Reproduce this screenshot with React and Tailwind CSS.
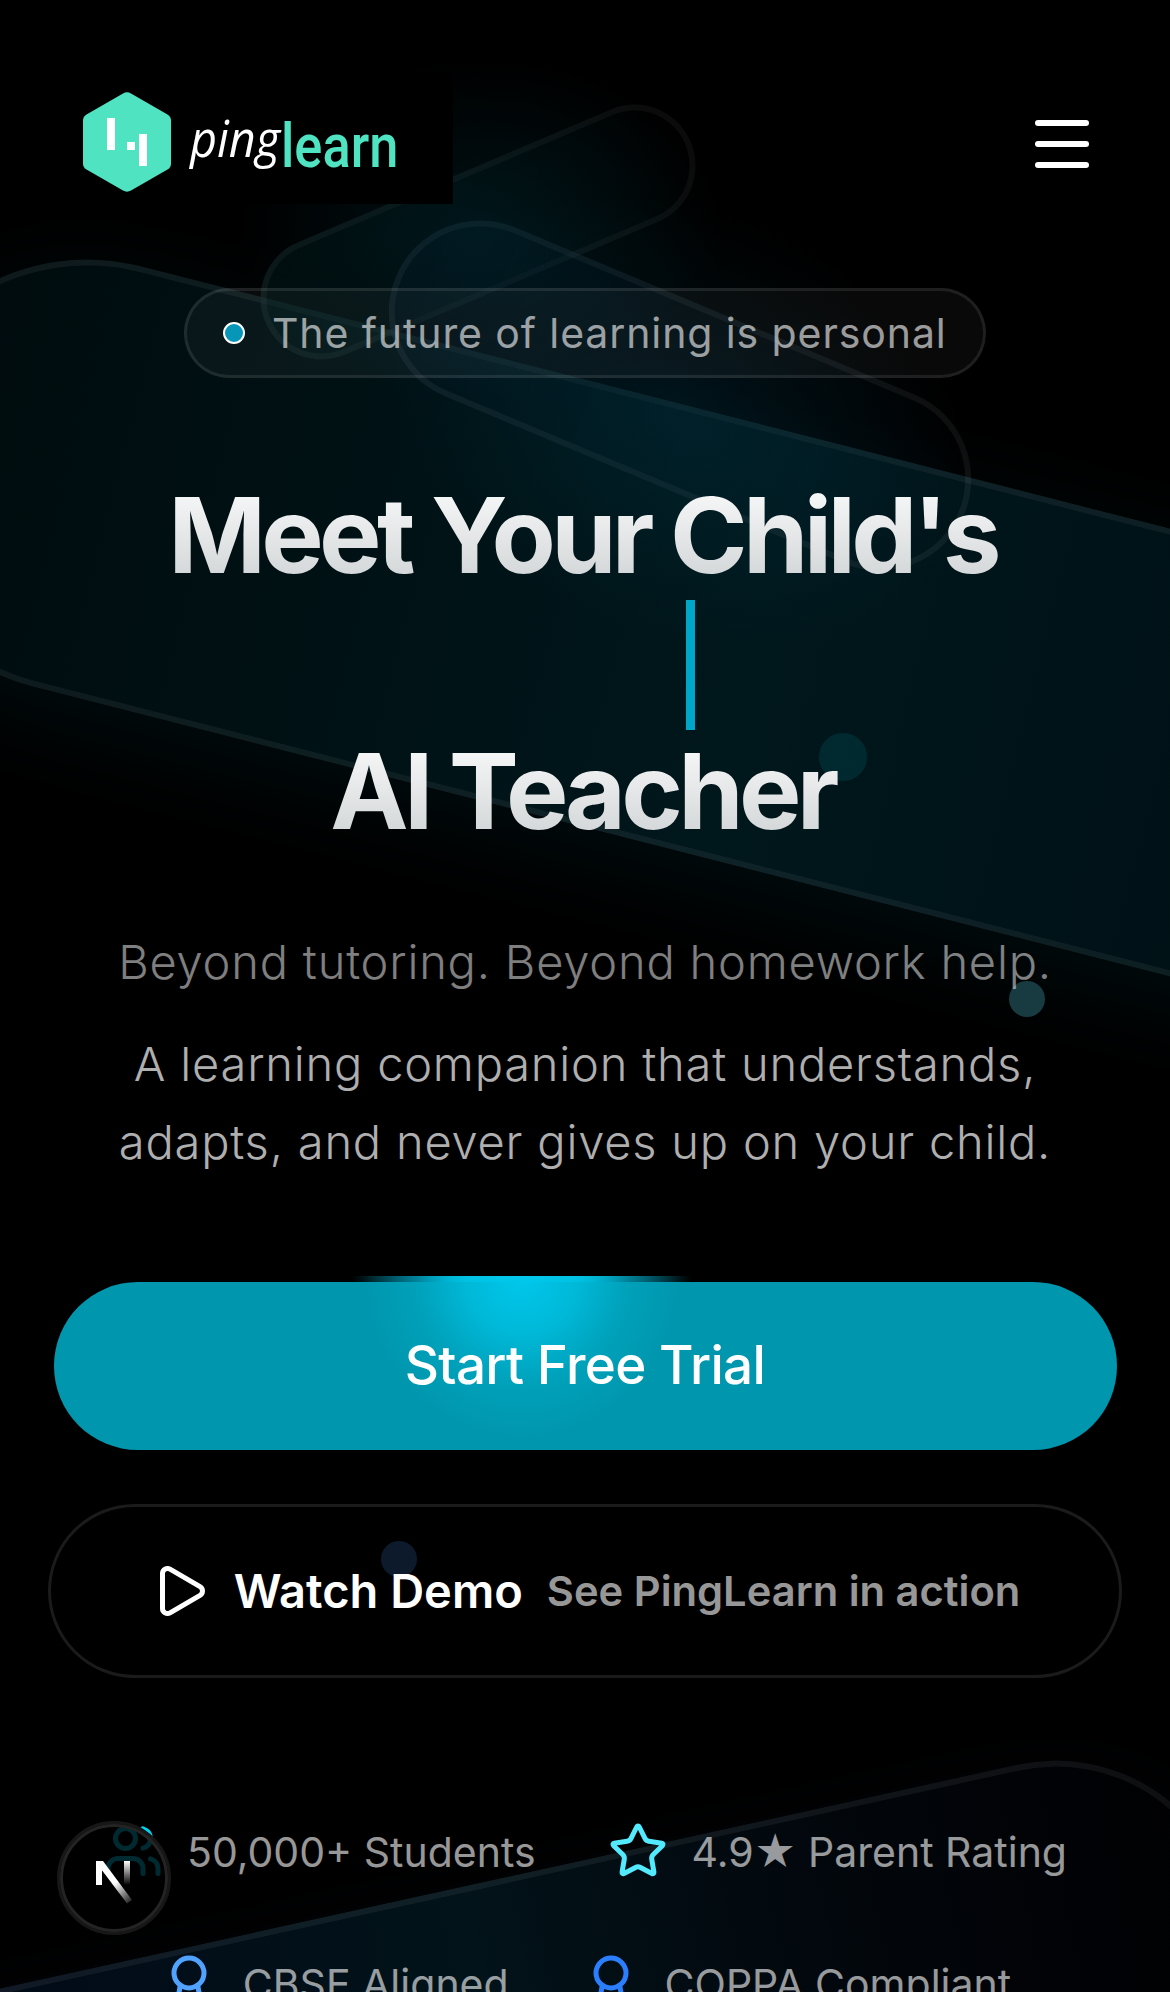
import { Play, Star, Users, Award } from "lucide-react";

const shapes = [
  // large upper band
  "left-[-151px] top-[430px] w-[1814px] h-[434px] rotate-[14.3deg] border-white/[0.055] from-[#000b0d] via-[#00171c] to-[#000d11] shadow-[0_24px_96px_rgba(0,60,75,0.22)]",
  // large lower band
  "left-[-251px] top-[1883px] w-[1500px] h-[360px] rotate-[-12.4deg] border-white/[0.06] from-[#020617] via-[#021319] to-[#010103] shadow-[0_24px_96px_rgba(30,40,60,0.18)]",
];

function Backdrop() {
  return (
    <div className="absolute inset-0 overflow-hidden pointer-events-none">
      {shapes.map((s) => (
        <div key={s} className={"absolute rounded-full border-[6px] bg-linear-to-r bg-origin-border " + s} />
      ))}
      <div className="absolute left-[247px] top-[171px] w-[462px] h-[122px] rotate-[-23deg] rounded-full border-[6px] border-white/[0.045] bg-linear-to-r from-[#001a1a]/50 to-transparent bg-origin-border" />
      <div className="absolute left-[372px] top-[304px] w-[616px] h-[183px] rotate-[22.7deg] rounded-full border-[6px] border-white/[0.055] bg-linear-to-r from-[#021420]/40 to-transparent bg-origin-border" />
      <div className="absolute left-[240px] top-[60px] w-[480px] h-[340px] bg-[radial-gradient(closest-side,rgba(0,60,75,0.3),transparent)]" />
      <div className="absolute left-[380px] top-[210px] w-[600px] h-[420px] rotate-[22deg] bg-[radial-gradient(closest-side,rgba(0,70,90,0.24),transparent)]" />
      <span className="absolute left-[819px] top-[733px] size-[48px] rounded-full bg-[#00d3f2]/10" />
      <span className="absolute left-[1009px] top-[981px] size-[36px] rounded-full bg-[#173b41]" />
      <span className="absolute left-[381px] top-[1541px] size-[36px] rounded-full bg-[#0c1a2c]" />
    </div>
  );
}

function Logo() {
  return (
    <div className="relative flex h-[132px] w-[381px] bg-black">
      <svg className="absolute left-[11px] top-[20px]" width="88" height="100" viewBox="0 0 88 100">
        <path d="M40 1.5Q44-.8 48 1.5L84.500 22.500Q88 24.500 88 28.500V71.500Q88 75.500 84.500 77.500L48 98.500Q44 100.800 40 98.500L3.500 77.500Q0 75.500 0 71.500V28.500Q0 24.500 3.500 22.500Z" fill="#50e3c2" />
        <path d="M24 26h8v32h-8zM44 50h8v8h-8zM56 42h8v32h-8z" fill="#fff" />
      </svg>
      <span className="absolute left-[118px] top-[35px] origin-left scale-x-[0.9] font-['Open_Sans',sans-serif] text-[52px]/[60px] font-medium italic text-white">ping</span>
      <span className="absolute left-[209px] top-[38px] origin-left scale-x-[0.845] font-['Roboto',sans-serif] text-[62px]/[72px] font-medium text-[#50e3c2]">learn</span>
    </div>
  );
}

function NextBadge() {
  return (
    <div className="absolute left-[57px] top-[1821px] flex size-[114px] items-center justify-center rounded-full border-[3px] border-[#171717] bg-black/80">
      <div className="absolute inset-0 rounded-full border-[3px] border-[#242424]" />
      <svg className="relative" width="108" height="108" viewBox="0 0 108 108">
        <defs>
          <linearGradient id="stem" x1="0" y1="0" x2="0" y2="1">
            <stop stopColor="#fff" />
            <stop offset="1" stopColor="#fff" stopOpacity="0" />
          </linearGradient>
          <linearGradient id="diag" gradientUnits="userSpaceOnUse" x1="52" y1="62" x2="71" y2="83">
            <stop stopColor="#fff" />
            <stop offset="1" stopColor="#fff" stopOpacity="0" />
          </linearGradient>
        </defs>
        <path d="M36 37h6v24h-6z" fill="#fff" />
        <path d="M36 37h7L72 76L67 79.500L38 41Z" fill="url(#diag)" />
        <path d="M64 37h6v24h-6z" fill="url(#stem)" />
      </svg>
    </div>
  );
}

function Stat({ icon: Icon, color, children }) {
  return (
    <div className="flex items-center gap-[24px]">
      <Icon size={60} strokeWidth={2} className={color} />
      <span className="pt-[3px] text-[41px]/[57px] text-white/60">{children}</span>
    </div>
  );
}

export default function App() {
  return (
    <div className="relative h-[1992px] w-[1170px] overflow-hidden bg-black font-['Inter',sans-serif] text-white antialiased">
      <Backdrop />
      <div className="relative flex flex-col items-center">
        <header className="flex h-[288px] w-full items-start justify-between pl-[72px] pr-[81px] pt-[72px]">
          <Logo />
          <button className="mt-[48px] flex w-[54px] flex-col gap-[15px]">
            <span className="h-[6px] rounded-full bg-white" />
            <span className="h-[6px] rounded-full bg-white" />
            <span className="h-[6px] rounded-full bg-white" />
          </button>
        </header>

        <div className="flex h-[90px] w-[802px] items-center gap-[27px] rounded-full border-[3px] border-white/[0.09] bg-white/[0.035] pl-[36px]">
          <span className="size-[22px] rounded-full border-2 border-white bg-[#0596b8]" />
          <span className="whitespace-nowrap text-[41px]/[60px] tracking-[0.9px] text-white/60">The future of learning is personal</span>
        </div>

        <h1 className="mt-[92px] flex flex-col items-center whitespace-nowrap text-[105px]/[130px] font-bold tracking-[-4.700px]">
          <span className="bg-linear-to-b from-white to-[#cbcfd1] bg-clip-text pr-[5px] text-transparent">Meet Your Child's</span>
          <span className="ml-[211px] h-[130px] w-[9px] bg-[#00a6c8]" />
          <span className="mt-[-4px] bg-linear-to-b from-white to-[#cbcfd1] bg-clip-text pr-[5px] text-transparent">AI Teacher</span>
        </h1>

        <div className="mt-[67px] text-center text-[47px]/[78px] font-light tracking-[0.8px]">
          <p className="text-white/50">Beyond tutoring. Beyond homework help.</p>
          <p className="mt-[24px] text-white/70">A learning companion that understands,<br />adapts, and never gives up on your child.</p>
        </div>

        <button className="relative mt-[101px] h-[168px] w-[1063px] text-[53px] font-medium tracking-[-0.7px]">
          <span className="absolute left-[268px] top-[-6px] h-[20px] w-[400px] bg-[radial-gradient(ellipse_200px_160px_at_50%_0,#00c8ec_25%,transparent_85%)]" />
          <span className="absolute inset-0 rounded-full bg-[#0096ad]" />
          <span className="absolute left-[268px] top-[-6px] h-[165px] w-[400px] bg-[radial-gradient(ellipse_160px_165px_at_50%_0,#00c8ec,rgba(0,193,226,0.8)_35%,rgba(0,190,222,0.28)_65%,transparent)]" />
          <span className="relative">Start Free Trial</span>
        </button>

        <button className="mt-[54px] flex h-[174px] w-[1074px] items-center justify-center gap-[24px] rounded-full border-[3px] border-[#1b1b1b] font-semibold">
          <Play size={60} strokeWidth={2} />
          <span className="text-[47px]">Watch Demo</span>
          <span className="text-[41.700px] text-white/60">See PingLearn in action</span>
        </button>

        <div className="mt-[143px] flex flex-wrap justify-center gap-x-[72px] gap-y-[72px]">
          <Stat icon={Users} color="text-[#00d3f2]">50,000+ Students</Stat>
          <Stat icon={Star} color="text-[#53eafd]">4.9★ Parent Rating</Stat>
          <Stat icon={Award} color="text-[#51a2ff]">CBSE Aligned</Stat>
          <Stat icon={Award} color="text-[#2b7fff]">COPPA Compliant</Stat>
        </div>
      </div>

      <NextBadge />
    </div>
  );
}
